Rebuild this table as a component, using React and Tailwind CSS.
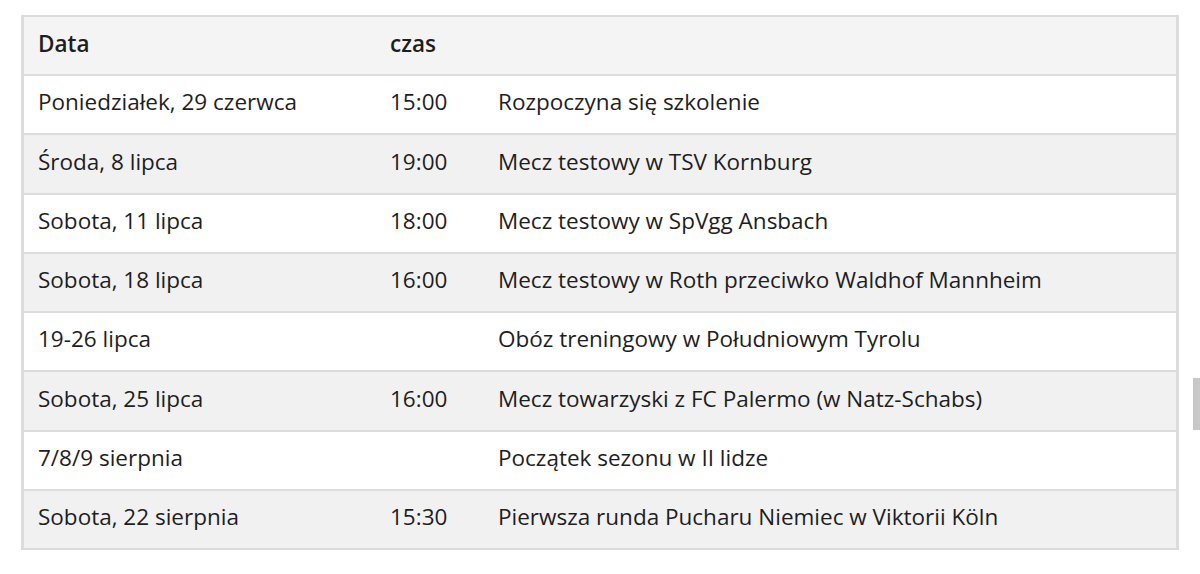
import React from "react";

const rows = [
  ["Poniedziałek, 29 czerwca", "15:00", "Rozpoczyna się szkolenie"],
  ["Środa, 8 lipca", "19:00", "Mecz testowy w TSV Kornburg"],
  ["Sobota, 11 lipca", "18:00", "Mecz testowy w SpVgg Ansbach"],
  ["Sobota, 18 lipca", "16:00", "Mecz testowy w Roth przeciwko Waldhof Mannheim"],
  ["19-26 lipca", "", "Obóz treningowy w Południowym Tyrolu"],
  ["Sobota, 25 lipca", "16:00", "Mecz towarzyski z FC Palermo (w Natz-Schabs)"],
  ["7/8/9 sierpnia", "", "Początek sezonu w II lidze"],
  ["Sobota, 22 sierpnia", "15:30", "Pierwsza runda Pucharu Niemiec w Viktorii Köln"],
];

export default function App() {
  return (
    <div className="relative w-[1200px] h-[574px] bg-white overflow-hidden" style={{ fontFamily: '"Open Sans", "Noto Sans", sans-serif' }}>
      <div className="pl-[21px] pt-[15px] w-[1179px]">
        <div className="border-t-2 border-l-[3px] border-r-[3px] border-b-2 border-[#dcdcdc] text-[#1e1e1e] text-[22.5px]">
          <div className="flex h-[57px] items-center pb-[3px] bg-[#f4f4f4] font-semibold">
            <div className="w-[366px] pl-[14px]">Data</div>
            <div className="w-[108px]">czas</div>
            <div className="flex-1"></div>
          </div>
          {rows.map((r, i) => (
            <div
              key={i}
              className={
                "flex h-[59.25px] items-center pb-[5px] border-t-2 border-[#dcdcdc] " +
                (i % 2 === 0 ? "bg-white" : "bg-[#f1f1f1]")
              }
            >
              <div className="w-[366px] pl-[14px]">{r[0]}</div>
              <div className="w-[108px]">{r[1]}</div>
              <div className="flex-1">{r[2]}</div>
            </div>
          ))}
        </div>
      </div>
      <div className="absolute left-[1193px] top-[378px] w-[7px] h-[52px] bg-[#c8c8c8]"></div>
    </div>
  );
}
